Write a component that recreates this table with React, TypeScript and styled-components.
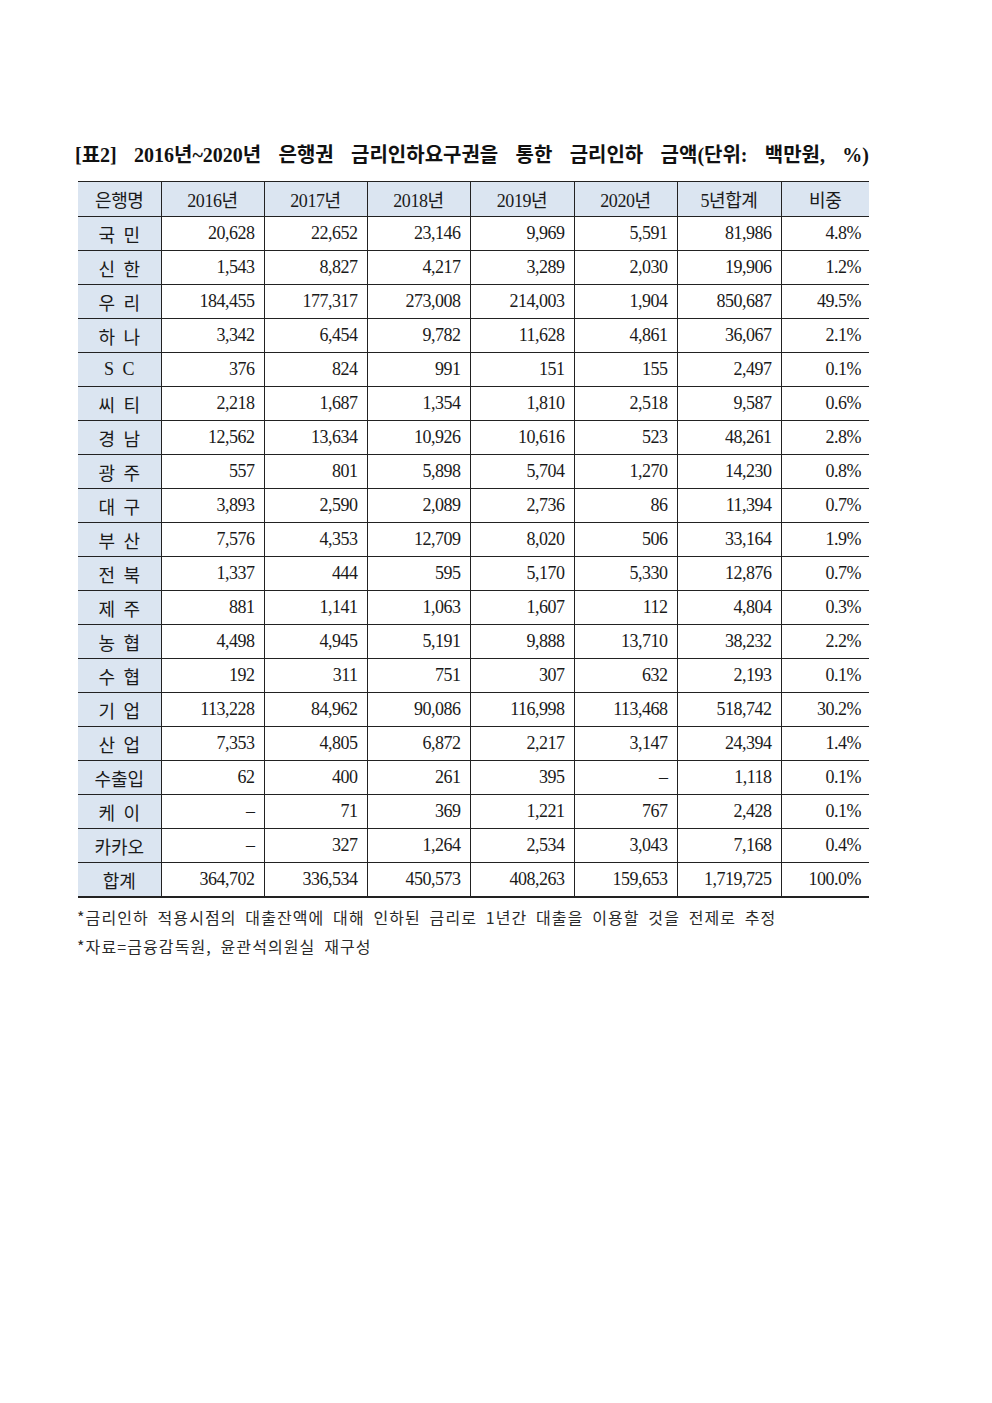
import styled, { createGlobalStyle } from "styled-components";

const GlobalStyle = createGlobalStyle`
    html, body {
        margin: 0;
        padding: 0;
        background: #ffffff;
    }
    body {
        font-family: "Liberation Serif", "Noto Sans CJK KR", serif;
        color: #1a1a1a;
    }
`

const Page = styled.div`
    width: 992px;
    min-height: 1403px;
    box-sizing: border-box;
    padding: 140px 0 0 78px;
`

const Title = styled.h2`
    width: 794px;
    margin: 0 0 11px -3px;
    font-size: 20px;
    line-height: 30px;
    font-weight: 700;
    color: #111;
    font-family: "Liberation Serif", "Noto Sans CJK KR", serif;
    text-align: justify;
    text-align-last: justify;
    white-space: nowrap;
`

const Table = styled.table`
    width: 791px;
    border-collapse: collapse;
    table-layout: fixed;
    border-top: 1.5px solid #222;
    border-bottom: 2px solid #222;
`

const HeadCell = styled.th`
    height: 34px;
    padding: 0;
    background: #dbe5f1;
    font-weight: 400;
    font-size: 18px;
    letter-spacing: -0.4px;
    text-align: center;
    border-left: 1px solid #222;
    border-bottom: 1px solid #222;
    &:first-child { border-left: none; }
`

const NameCell = styled.td`
    height: 33px;
    padding: 0;
    background: #dbe5f1;
    font-size: 18px;
    text-align: center;
    word-spacing: 4px;
    border-bottom: 1px solid #222;
`

const NumCell = styled.td<{ $last?: boolean }>`
    height: 33px;
    padding: 0 ${(p) => (p.$last ? "8px" : "9px")} 0 0;
    font-size: 18px;
    letter-spacing: -0.5px;
    text-align: right;
    border-left: 1px solid #222;
    border-bottom: 1px solid #222;
`

const Notes = styled.div`
    margin-top: 5px;
    margin-left: -1px;
    font-family: "Noto Sans CJK KR", sans-serif;
    font-size: 16px;
    line-height: 29px;
    color: #2a2a2a;
    letter-spacing: 1.1px;
    word-spacing: 4px;
`

const widths = [83, 103, 103, 103, 104, 103, 104, 88];
const heads = ["은행명", "2016년", "2017년", "2018년", "2019년", "2020년", "5년합계", "비중"];

const rows: string[][] = [
    ["국 민", "20,628", "22,652", "23,146", "9,969", "5,591", "81,986", "4.8%"],
    ["신 한", "1,543", "8,827", "4,217", "3,289", "2,030", "19,906", "1.2%"],
    ["우 리", "184,455", "177,317", "273,008", "214,003", "1,904", "850,687", "49.5%"],
    ["하 나", "3,342", "6,454", "9,782", "11,628", "4,861", "36,067", "2.1%"],
    ["S C", "376", "824", "991", "151", "155", "2,497", "0.1%"],
    ["씨 티", "2,218", "1,687", "1,354", "1,810", "2,518", "9,587", "0.6%"],
    ["경 남", "12,562", "13,634", "10,926", "10,616", "523", "48,261", "2.8%"],
    ["광 주", "557", "801", "5,898", "5,704", "1,270", "14,230", "0.8%"],
    ["대 구", "3,893", "2,590", "2,089", "2,736", "86", "11,394", "0.7%"],
    ["부 산", "7,576", "4,353", "12,709", "8,020", "506", "33,164", "1.9%"],
    ["전 북", "1,337", "444", "595", "5,170", "5,330", "12,876", "0.7%"],
    ["제 주", "881", "1,141", "1,063", "1,607", "112", "4,804", "0.3%"],
    ["농 협", "4,498", "4,945", "5,191", "9,888", "13,710", "38,232", "2.2%"],
    ["수 협", "192", "311", "751", "307", "632", "2,193", "0.1%"],
    ["기 업", "113,228", "84,962", "90,086", "116,998", "113,468", "518,742", "30.2%"],
    ["산 업", "7,353", "4,805", "6,872", "2,217", "3,147", "24,394", "1.4%"],
    ["수출입", "62", "400", "261", "395", "–", "1,118", "0.1%"],
    ["케 이", "–", "71", "369", "1,221", "767", "2,428", "0.1%"],
    ["카카오", "–", "327", "1,264", "2,534", "3,043", "7,168", "0.4%"],
    ["합계", "364,702", "336,534", "450,573", "408,263", "159,653", "1,719,725", "100.0%"],
];

const App = () => {
    return (
        <>
            <GlobalStyle />
            <Page>
                <Title>[표2] 2016년~2020년 은행권 금리인하요구권을 통한 금리인하 금액(단위: 백만원, %)</Title>
                <Table>
                    <colgroup>
                        {widths.map((w, i) => <col key={i} style={{ width: w }} />)}
                    </colgroup>
                    <thead>
                        <tr>
                            {heads.map((h) => <HeadCell key={h}>{h}</HeadCell>)}
                        </tr>
                    </thead>
                    <tbody>
                        {rows.map((r) => (
                            <tr key={r[0]}>
                                <NameCell>{r[0]}</NameCell>
                                {r.slice(1).map((v, i) => (
                                    <NumCell key={i} $last={i === 6}>{v}</NumCell>
                                ))}
                            </tr>
                        ))}
                    </tbody>
                </Table>
                <Notes>
                    <div>*금리인하 적용시점의 대출잔액에 대해 인하된 금리로 1년간 대출을 이용할 것을 전제로 추정</div>
                    <div>*자료=금융감독원, 윤관석의원실 재구성</div>
                </Notes>
            </Page>
        </>
    )
}

export default App;
